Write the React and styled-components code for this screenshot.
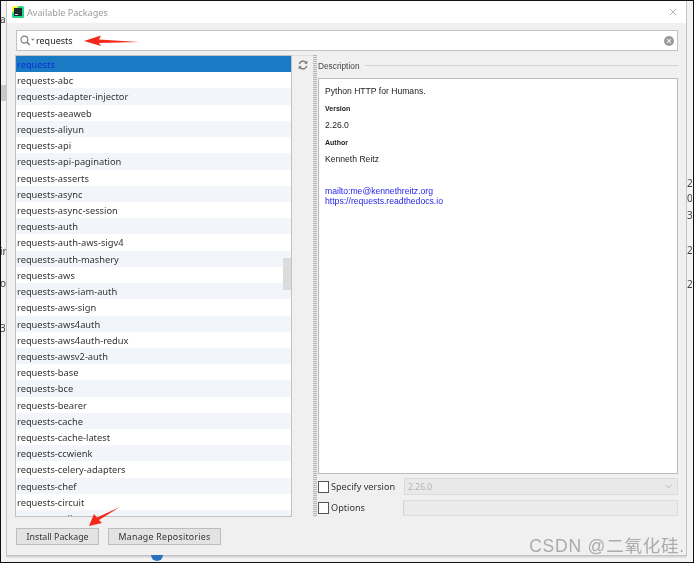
import styled, { createGlobalStyle } from "styled-components";

const packages = [
  "requests",
  "requests-abc",
  "requests-adapter-injector",
  "requests-aeaweb",
  "requests-aliyun",
  "requests-api",
  "requests-api-pagination",
  "requests-asserts",
  "requests-async",
  "requests-async-session",
  "requests-auth",
  "requests-auth-aws-sigv4",
  "requests-auth-mashery",
  "requests-aws",
  "requests-aws-iam-auth",
  "requests-aws-sign",
  "requests-aws4auth",
  "requests-aws4auth-redux",
  "requests-awsv2-auth",
  "requests-base",
  "requests-bce",
  "requests-bearer",
  "requests-cache",
  "requests-cache-latest",
  "requests-ccwienk",
  "requests-celery-adapters",
  "requests-chef",
  "requests-circuit",
  "requests-call",
];

const App = () => {
  return (
    <>
      <GlobalStyle />
      <Page>
        <SideStrip>
          <StripText $top={12}>a</StripText>
          <StripBlock $top={84} />
          <StripText $top={244}>ir</StripText>
          <StripText $top={276}>o</StripText>
          <StripText $top={321}>3</StripText>
        </SideStrip>
        <Dialog>
          <TitleBar>
            <AppIcon viewBox="0 0 12 12">
              <rect width="12" height="12" rx="1.5" fill="#21d789" />
              <path d="M0 0h7L0 7z" fill="#fcf84a" />
              <rect x="2" y="2" width="8" height="8" fill="#1c2b2b" />
              <rect x="3" y="8" width="3" height="1" fill="#ddd" />
            </AppIcon>
            <TitleText>Available Packages</TitleText>
            <CloseIcon viewBox="0 0 10 10">
              <path d="M1 1l8 8M9 1l-8 8" stroke="#9a9a9a" strokeWidth="0.9" fill="none" />
            </CloseIcon>
          </TitleBar>
          <Body>
            <SearchBox>
              <SearchIcon viewBox="0 0 17 12">
                <circle cx="5" cy="5" r="3.9" stroke="#7a7a7a" strokeWidth="1.3" fill="none" />
                <path d="M8 8l3 3" stroke="#7a7a7a" strokeWidth="1.7" />
                <path d="M12.5 4h4l-2 2.2z" fill="#7a7a7a" />
              </SearchIcon>
              <SearchText>requests</SearchText>
              <ClearIcon viewBox="0 0 10 10">
                <circle cx="5" cy="5" r="5" fill="#9b9b9b" />
                <path d="M3.2 3.2l3.6 3.6M6.8 3.2l-3.6 3.6" stroke="#eee" strokeWidth="1.2" />
              </ClearIcon>
            </SearchBox>
            <Columns>
              <ListPanel>
                {packages.map((name, i) => (
                  <ListRow key={name} $selected={i === 0} $odd={i % 2 === 1}>
                    {name}
                  </ListRow>
                ))}
                <ScrollThumb />
              </ListPanel>
              <ToolColumn>
                <RefreshIcon viewBox="0 0 12 12">
                  <path d="M1.6 5A4.5 4.5 0 0 1 9.6 3" stroke="#6e6e6e" strokeWidth="1.5" fill="none" />
                  <path d="M10.4 7A4.5 4.5 0 0 1 2.4 9" stroke="#6e6e6e" strokeWidth="1.5" fill="none" />
                  <path d="M7.6 4.4h3.6V.8z" fill="#6e6e6e" />
                  <path d="M4.4 7.6H.8v3.6z" fill="#6e6e6e" />
                </RefreshIcon>
              </ToolColumn>
              <Splitter />
              <DetailPanel>
                <Legend>
                  <LegendText>Description</LegendText>
                  <LegendLine />
                </Legend>
                <DescriptionBox>
                  <DescLine>Python HTTP for Humans.</DescLine>
                  <DescHeading>Version</DescHeading>
                  <DescLine>2.26.0</DescLine>
                  <DescHeading>Author</DescHeading>
                  <DescLine>Kenneth Reitz</DescLine>
                  <LinkGroup>
                    <DescLink>mailto:me@kennethreitz.org</DescLink>
                    <DescLink>https://requests.readthedocs.io</DescLink>
                  </LinkGroup>
                </DescriptionBox>
                <OptionRow>
                  <Checkbox />
                  <OptionLabel>Specify version</OptionLabel>
                  <VersionSelect>
                    <span>2.26.0</span>
                    <ChevronIcon viewBox="0 0 8 5">
                      <path d="M.5.5L4 4 7.5.5" stroke="#b5b5b5" fill="none" />
                    </ChevronIcon>
                  </VersionSelect>
                </OptionRow>
                <OptionRow>
                  <Checkbox />
                  <OptionLabel>Options</OptionLabel>
                  <OptionsInput />
                </OptionRow>
              </DetailPanel>
            </Columns>
            <ButtonRow>
              <Button>Install Package</Button>
              <Button $spaced>Manage Repositories</Button>
            </ButtonRow>
          </Body>
        </Dialog>
        <SideStrip>
          <StripText $top={176} $left={0}>2</StripText>
          <StripText $top={191} $left={0}>0.</StripText>
          <StripText $top={208} $left={0}>3</StripText>
          <StripText $top={243} $left={0}>2</StripText>
          <StripText $top={277} $left={0}>2</StripText>
        </SideStrip>

        <RedArrow viewBox="0 0 56 12" $left={83} $top={34} $w={56} $h={12}>
          <path d="M0 6L17 0.5 15 4.5 55 7 15 8 17 11z" fill="#f5281c" />
        </RedArrow>
        <RedArrow viewBox="0 0 32 20" $left={88} $top={506} $w={32} $h={20}>
          <path d="M0 19L5 7 8 10.5 31 0 10 13 13 16z" fill="#f5281c" />
        </RedArrow>
        <Watermark>CSDN @二氧化硅.</Watermark>
        <BottomIcon />
      </Page>
    </>
  );
};
export default App;

const GlobalStyle = createGlobalStyle`
  html, body {
    margin: 0;
    padding: 0;
    background: #ffffff;
  }
`;

const Page = styled.div`
  position: relative;
  width: 694px;
  height: 563px;
  display: flex;
  box-sizing: border-box;
  border: 1px solid #111111;
  background: #f4f4f4;
  overflow: hidden;
  font-family: "Noto Sans", "Liberation Sans", sans-serif;
  filter: blur(0.35px);
`;

const SideStrip = styled.div`
  position: relative;
  width: 5px;
  flex: none;
  background: #f3f3f3;
  overflow: hidden;
`;

const StripText = styled.span`
  position: absolute;
  top: ${(p) => p.$top}px;
  left: ${(p) => (p.$left === undefined ? -1 : p.$left)}px;
  font-size: 10px;
  line-height: 12px;
  color: #444444;
`;

const StripBlock = styled.div`
  position: absolute;
  top: ${(p) => p.$top}px;
  left: 0;
  width: 6px;
  height: 16px;
  background: #c9c9c9;
`;

const Dialog = styled.div`
  flex: none;
  width: 681px;
  height: 555px;
  display: flex;
  flex-direction: column;
  box-sizing: border-box;
  border: 1px solid #c4c4c4;
  border-top: none;
  box-shadow: 0 1px 2px rgba(0, 0, 0, 0.2);
`;

const TitleBar = styled.div`
  height: 22px;
  flex: none;
  display: flex;
  align-items: center;
  padding: 0 9px 0 5px;
  background: #ffffff;
`;

const AppIcon = styled.svg`
  width: 12px;
  height: 12px;
  margin-right: 3px;
`;

const TitleText = styled.div`
  flex: 1;
  font-size: 9.1px;
  color: #9a9a9a;
`;

const CloseIcon = styled.svg`
  width: 8px;
  height: 8px;
`;

const Body = styled.div`
  flex: 1;
  min-height: 0;
  display: flex;
  flex-direction: column;
  padding: 7px 8px 0 8px;
  background: #f0f0f0;
`;

const SearchBox = styled.div`
  height: 21px;
  flex: none;
  display: flex;
  align-items: center;
  box-sizing: border-box;
  padding: 0 3px 0 3px;
  margin: 0 0 4px 1px;
  background: #ffffff;
  border: 1px solid #c2c2c2;
`;

const SearchIcon = styled.svg`
  width: 15px;
  height: 11px;
  margin-right: 1px;
`;

const SearchText = styled.div`
  flex: 1;
  font-size: 9px;
  color: #222222;
`;

const ClearIcon = styled.svg`
  width: 10px;
  height: 10px;
`;

const Columns = styled.div`
  height: 462px;
  flex: none;
  display: flex;
`;

const ListPanel = styled.div`
  position: relative;
  width: 277px;
  flex: none;
  box-sizing: border-box;
  overflow: hidden;
  background: #ffffff;
  border: 1px solid #c2c2c2;
`;

const ListRow = styled.div`
  height: 16.22px;
  padding-left: 1px;
  font-size: 9.3px;
  line-height: 18px;
  white-space: nowrap;
  color: ${(p) => (p.$selected ? "#0a2fd6" : "#333333")};
  background: ${(p) => (p.$selected ? "#1a7bc4" : p.$odd ? "#ffffff" : "#f2f5f9")};
`;

const ScrollThumb = styled.div`
  position: absolute;
  right: 0;
  top: 202px;
  width: 8px;
  height: 32px;
  background: #dcdcdc;
`;

const ToolColumn = styled.div`
  width: 21px;
  flex: none;
  display: flex;
  justify-content: center;
  padding-top: 4px;
  box-sizing: border-box;
  border-top: 1px solid #dddddd;
`;

const RefreshIcon = styled.svg`
  width: 10px;
  height: 10px;
`;

const Splitter = styled.div`
  width: 4px;
  flex: none;
  background: repeating-linear-gradient(to bottom, #b9b9b9 0 1px, #e6e6e6 1px 2px);
`;

const DetailPanel = styled.div`
  flex: 1;
  min-width: 0;
  display: flex;
  flex-direction: column;
  padding-left: 1px;
`;

const Legend = styled.div`
  height: 23px;
  flex: none;
  display: flex;
  align-items: center;
  gap: 5px;
  padding-bottom: 2px;
  box-sizing: border-box;
`;

const LegendText = styled.span`
  font-family: "Liberation Sans", sans-serif;
  font-size: 8.3px;
  color: #444444;
`;

const LegendLine = styled.div`
  flex: 1;
  height: 1px;
  background: #d4d4d4;
`;

const DescriptionBox = styled.div`
  height: 396px;
  flex: none;
  box-sizing: border-box;
  padding: 7px 6px;
  margin-bottom: 2px;
  background: #ffffff;
  border: 1px solid #bdbdbd;
  font-family: "Liberation Sans", sans-serif;
`;

const DescLine = styled.div`
  font-size: 8.6px;
  line-height: 11px;
  color: #222222;
`;

const DescHeading = styled.div`
  margin: 7px 0 7px;
  font-size: 7px;
  line-height: 9px;
  font-weight: bold;
  color: #222222;
`;

const LinkGroup = styled.div`
  margin-top: 21px;
`;

const DescLink = styled.div`
  font-size: 8.65px;
  line-height: 10px;
  color: #1f1fe6;
`;

const OptionRow = styled.div`
  height: 21px;
  flex: none;
  display: flex;
  align-items: center;
`;

const Checkbox = styled.div`
  width: 9px;
  height: 10px;
  flex: none;
  margin-right: 2px;
  background: #ffffff;
  border: 1px solid #555555;
`;

const OptionLabel = styled.span`
  width: 73px;
  flex: none;
  font-size: 9.15px;
  white-space: nowrap;
  color: #333333;
`;

const VersionSelect = styled.div`
  flex: 1;
  height: 17px;
  display: flex;
  align-items: center;
  justify-content: space-between;
  box-sizing: border-box;
  padding: 0 5px 0 3px;
  background: #e9e9e9;
  border: 1px solid #dcdcdc;
  font-size: 8.6px;
  color: #b4b4b4;
`;

const ChevronIcon = styled.svg`
  width: 7px;
  height: 5px;
`;

const OptionsInput = styled.div`
  flex: 1;
  height: 16px;
  margin-left: -1px;
  box-sizing: border-box;
  background: #ebebeb;
  border: 1px solid #dcdcdc;
  border-left-color: #c8d4de;
`;

const ButtonRow = styled.div`
  display: flex;
  gap: 9px;
  padding: 11px 0 0 1px;
`;

const Button = styled.div`
  height: 17px;
  padding: 0 9.5px;
  display: flex;
  align-items: center;
  box-sizing: border-box;
  background: #e3e3e3;
  border: 1px solid #bdbdbd;
  font-size: 8.8px;
  letter-spacing: ${(p) => (p.$spaced ? "0.25px" : "0")};
  color: #333333;
`;

const RedArrow = styled.svg`
  position: absolute;
  left: ${(p) => p.$left}px;
  top: ${(p) => p.$top}px;
  width: ${(p) => p.$w}px;
  height: ${(p) => p.$h}px;
`;

const Watermark = styled.div`
  position: absolute;
  right: 8px;
  top: 535px;
  font-family: "Liberation Sans", "Noto Sans CJK SC", sans-serif;
  font-size: 17.5px;
  line-height: 20px;
  letter-spacing: 0.8px;
  color: #ababab;
`;

const BottomIcon = styled.div`
  position: absolute;
  left: 150px;
  top: 554px;
  width: 12px;
  height: 6px;
  border-radius: 0 0 6px 6px;
  background: #2a6fc0;
`;
